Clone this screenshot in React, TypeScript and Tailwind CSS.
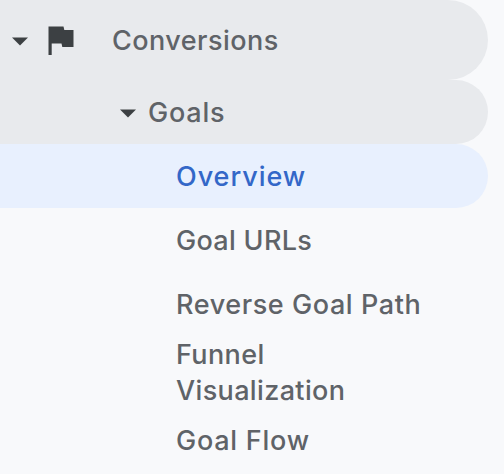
import clsx from "clsx";

const items = [
  { label: "Overview", active: true, spacing: "tracking-[0.95px]" },
  { label: "Goal URLs", spacing: "tracking-[0.3px]" },
  { label: "Reverse Goal Path", spacing: "tracking-[0.58px]" },
  { label: "Funnel Visualization", spacing: "tracking-[0.36px]" },
  { label: "Goal Flow", spacing: "tracking-[0.75px]" },
];

const Caret = () => (
  <svg className="w-4 h-[9px] shrink-0" viewBox="0 0 16 9" fill="#3c4043">
    <path d="M0 0.500h16L8 8.500z" />
  </svg>
);

const App = () => {
  return (
    <nav className="w-full h-[474px] overflow-hidden bg-[#f8f9fb] pr-4 font-['Inter',sans-serif] text-[27px] leading-9 font-medium text-[#5f6368]">
      {/* Section */}
      <div className="flex items-center h-20 pl-3 pt-0.5 rounded-r-full bg-[#e8eaed]">
        <Caret />
        <svg
          className="w-[26px] h-[29px] ml-5 mb-0.5 shrink-0"
          viewBox="0 0 26 29"
          fill="#3c4043"
        >
          <path d="M0.500 0.500h15l0.800 3.500h9.200v17H14.300l-0.800-3.500H3.700v11.500H0.500z" />
        </svg>
        <span className="ml-[38px] tracking-[0.46px]">Conversions</span>
      </div>

      {/* Group */}
      <div className="flex items-center h-16 pl-[120px] pt-0.5 rounded-r-full bg-[#e8eaed]">
        <Caret />
        <span className="ml-3 tracking-[0.8px]">Goals</span>
      </div>

      {/* Reports */}
      <ul>
        {items.map((item) => (
          <li
            key={item.label}
            className={clsx(
              "flex items-center min-h-16 pl-44 pt-0.5 rounded-r-full",
              item.label.length > 17 && "h-[72px]",
              item.active && "bg-[#e8f0fe] text-[#3367c8]"
            )}
          >
            <span className={clsx("max-w-[250px]", item.spacing)}>
              {item.label}
            </span>
          </li>
        ))}
      </ul>
    </nav>
  );
};

export default App;
